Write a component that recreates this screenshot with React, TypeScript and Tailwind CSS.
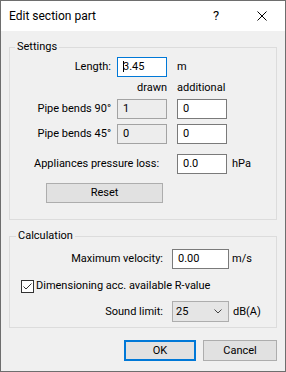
import React from "react";

function Box({
  w,
  children,
  readOnly,
  focused,
}: {
  w: string;
  children?: React.ReactNode;
  readOnly?: boolean;
  focused?: boolean;
}) {
  const cls = focused
    ? "border-[#0078d7] bg-white"
    : readOnly
    ? "border-[#a3a3a3] bg-[#ededed]"
    : "border-[#7a7a7a] bg-white";
  return (
    <div className={`relative ${w} h-[20px] border ${cls} flex items-center pl-[5px]`}>
      {children}
    </div>
  );
}

export default function App() {
  return (
    <div className="w-[286px] h-[372px] border border-[#6e6e6e] bg-[#f0f0f0] flex flex-col text-black text-[11px] leading-[16px] font-['Roboto','Segoe_UI',sans-serif] select-none">
      {/* Title bar */}
      <div className="h-[30px] bg-white flex items-center shrink-0">
        <span className="flex-1 pl-[8px] text-[12px]">Edit section part</span>
        <div className="w-[46px] h-full flex items-center justify-center text-[13px]">?</div>
        <div className="w-[46px] h-full flex items-center justify-center">
          <svg width="10" height="10" viewBox="0 0 10 10">
            <path d="M0.5 0.5 L9.5 9.5 M9.5 0.5 L0.5 9.5" stroke="#000" strokeWidth="1" fill="none" />
          </svg>
        </div>
      </div>

      <div className="px-[8px] flex flex-col">
        {/* Settings */}
        <fieldset className="mt-[8px] border border-[#dcdcdc] pb-[16px]">
          <legend className="ml-[5px] px-[2px] leading-[16px]">Settings</legend>
          <div className="flex flex-col">
            <div className="mt-[2px] h-[20px] flex items-center">
              <div className="w-[101px] text-right">Length:</div>
              <div className="ml-[6px]">
                <Box w="w-[50px]" focused>
                  <span className="absolute left-[5px] top-[3px] w-[1px] h-[11px] bg-black" />
                  3.45
                </Box>
              </div>
              <span className="ml-[10px]">m</span>
            </div>
            <div className="mt-[3px] h-[16px] flex items-center">
              <div className="w-[107px]" />
              <div className="w-[50px] text-right">drawn</div>
              <div className="ml-[10px]">additional</div>
            </div>
            <div className="mt-[3px] h-[20px] flex items-center">
              <div className="w-[101px] text-right">Pipe bends 90°</div>
              <div className="ml-[6px]">
                <Box w="w-[50px]" readOnly>1</Box>
              </div>
              <div className="ml-[10px]">
                <Box w="w-[50px]">0</Box>
              </div>
            </div>
            <div className="mt-[5px] h-[20px] flex items-center">
              <div className="w-[101px] text-right">Pipe bends 45°</div>
              <div className="ml-[6px]">
                <Box w="w-[50px]" readOnly>0</Box>
              </div>
              <div className="ml-[10px]">
                <Box w="w-[50px]">0</Box>
              </div>
            </div>
            <div className="mt-[10px] h-[20px] flex items-center">
              <div className="ml-[24px] w-[143px]">Appliances pressure loss:</div>
              <Box w="w-[50px]">0.0</Box>
              <span className="ml-[5px]">hPa</span>
            </div>
            <div className="mt-[9px] ml-[36px] w-[117px] h-[20px] border border-[#adadad] bg-[#e1e1e1] flex items-center justify-center">
              Reset
            </div>
          </div>
        </fieldset>

        {/* Calculation */}
        <fieldset className="mt-[8px] border border-[#dcdcdc] pb-[5px]">
          <legend className="ml-[6px] px-[2px] leading-[16px]">Calculation</legend>
          <div className="flex flex-col">
            <div className="mt-[5px] h-[20px] flex items-center">
              <div className="w-[153px] text-right">Maximum velocity:</div>
              <div className="ml-[9px]">
                <Box w="w-[57px]">0.00</Box>
              </div>
              <span className="ml-[3px]">m/s</span>
            </div>
            <div className="mt-[9px] h-[16px] flex items-center">
              <div className="ml-[11px] w-[13px] h-[13px] border border-[#333333] bg-white flex items-center justify-center">
                <svg width="11" height="11" viewBox="0 0 11 11">
                  <path d="M1.5 5.5 L4 8 L9.5 2.5" stroke="#333333" strokeWidth="1" fill="none" />
                </svg>
              </div>
              <span className="ml-[2px]">Dimensioning acc. available R-value</span>
            </div>
            <div className="mt-[7px] h-[21px] flex items-center">
              <div className="w-[153px] text-right">Sound limit:</div>
              <div className="ml-[9px] w-[57px] h-[21px] border border-[#adadad] bg-[#e5e5e5] flex items-center pl-[3px] pr-[6px]">
                <span className="flex-1">25</span>
                <svg width="8" height="5" viewBox="0 0 8 5">
                  <path d="M0.5 0.5 L4 4 L7.5 0.5" stroke="#444444" strokeWidth="1" fill="none" />
                </svg>
              </div>
              <span className="ml-[4px]">dB(A)</span>
            </div>
          </div>
        </fieldset>

        {/* Buttons */}
        <div className="mt-[12px] flex justify-end gap-[7px]">
          <div className="w-[72px] h-[21px] border-2 border-[#0078d7] bg-[#e1e1e1] flex items-center justify-center">
            OK
          </div>
          <div className="w-[74px] h-[21px] border border-[#adadad] bg-[#e1e1e1] flex items-center justify-center">
            Cancel
          </div>
        </div>
      </div>
    </div>
  );
}
